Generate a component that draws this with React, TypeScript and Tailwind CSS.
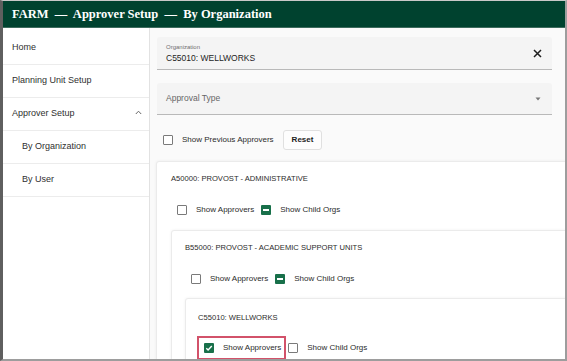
import React from "react";

const sans = { fontFamily: "'Liberation Sans', Arial, sans-serif" };

function Box({ state }: { state: "off" | "on" | "mixed" }) {
  if (state === "off") {
    return <span className="block w-[10px] h-[10px] shrink-0 rounded-[1px] border border-[#7a7a7a] bg-white" />;
  }
  return (
    <span className="flex w-[10px] h-[10px] shrink-0 items-center justify-center rounded-[1px] bg-[#18704a]">
      {state === "mixed" ? (
        <span className="block w-[6px] h-[2px] bg-white" />
      ) : (
        <svg width="8" height="8" viewBox="0 0 8 8">
          <path d="M1.3 4.2 L3.1 6 L6.8 2" fill="none" stroke="white" strokeWidth="1.4" />
        </svg>
      )}
    </span>
  );
}

function CheckRow({ approvers, child, mark }: { approvers: "off" | "on"; child: "off" | "mixed"; mark?: boolean }) {
  return (
    <div className="flex items-center h-[20px] pl-[6px] text-[8px] text-[#2b2b2b]">
      <div className="relative flex items-center gap-[9px]">
        {mark && <span className="absolute -left-[7px] -right-[5px] -top-[6px] -bottom-[6px] border-2 border-[#d2526a]" />}
        <Box state={approvers} />
        <span>Show Approvers</span>
      </div>
      <div className="flex items-center gap-[9px] ml-[7px]">
        <Box state={child} />
        <span>Show Child Orgs</span>
      </div>
    </div>
  );
}

const navItems: { label: string; sub?: boolean; open?: boolean }[] = [
  { label: "Home" },
  { label: "Planning Unit Setup" },
  { label: "Approver Setup", open: true },
  { label: "By Organization", sub: true },
  { label: "By User", sub: true },
];

export default function App() {
  return (
    <div
      className="w-[567px] h-[361px] flex flex-col overflow-hidden bg-white border-t border-t-[#c9c9c9] border-l-[3px] border-l-[#5f5f5f] border-r-2 border-r-[#9d9d9d] border-b-2 border-b-[#9d9d9d]"
      style={sans}
    >
      <header className="h-[27px] shrink-0 bg-[#00422f] flex items-center pl-[9px] border-b border-[#3d6b5d]">
        <h1 className="text-white font-bold text-[12.5px] leading-none" style={{ fontFamily: "'Liberation Serif', 'DejaVu Serif', serif" }}>
          FARM &nbsp;—&nbsp; Approver Setup &nbsp;—&nbsp; By Organization
        </h1>
      </header>

      <div className="flex flex-1 min-h-0">
        <nav className="w-[147px] shrink-0 bg-white border-r border-[#e2e2e2] pt-[4px]">
          {navItems.map((item) => (
            <div
              key={item.label}
              className={`h-[33px] flex items-center justify-between border-b border-[#ececec] text-[9px] text-[#2f2f2f] ${item.sub ? "pl-[19px]" : "pl-[9px]"} pr-[7px]`}
            >
              <span>{item.label}</span>
              {item.open && (
                <svg width="7" height="5" viewBox="0 0 7 5" className="-mt-[4px]">
                  <path d="M0.8 4 L3.5 1.2 L6.2 4" fill="none" stroke="#666" strokeWidth="1" />
                </svg>
              )}
            </div>
          ))}
        </nav>

        <main className="flex-1 min-w-0 overflow-hidden bg-[#fafafa] pt-[9px]">
          <div className="ml-[7px] w-[395px] h-[33px] bg-[#f4f4f4] border-b border-[#b9b9b9] rounded-t-[3px] flex items-center justify-between pl-[9px] pr-[10px]">
            <div className="flex flex-col">
              <span className="text-[6px] leading-[8px] text-[#6f6f6f]">Organization</span>
              <span className="text-[8.5px] leading-[12px] text-[#1e1e1e] mt-[1px]">C55010: WELLWORKS</span>
            </div>
            <svg width="9" height="9" viewBox="0 0 9 9">
              <path d="M1 1 L8 8 M8 1 L1 8" stroke="#1e1e1e" strokeWidth="1.5" />
            </svg>
          </div>

          <div className="ml-[7px] mt-[13px] w-[395px] h-[32px] bg-[#f4f4f4] border-b border-[#b9b9b9] rounded-t-[3px] flex items-center justify-between pl-[9px] pr-[11px]">
            <span className="text-[8.5px] text-[#666]">Approval Type</span>
            <svg width="6" height="4" viewBox="0 0 6 4">
              <path d="M0.5 0.5 L5.5 0.5 L3 3.5 Z" fill="#777" />
            </svg>
          </div>

          <div className="mt-[15px] ml-[13px] flex items-center h-[20px] text-[8px] text-[#2b2b2b]">
            <Box state="off" />
            <span className="ml-[9px]">Show Previous Approvers</span>
            <button className="ml-[9px] h-[20px] px-[8px] rounded-[3px] border border-[#e0e0e0] bg-[#fdfdfd] font-bold text-[8px] text-[#222]">
              Reset
            </button>
          </div>

          <div className="mt-[11px] ml-[6px] w-[440px] bg-white border border-[#ebebeb] rounded-[3px] shadow-[0_0_3px_rgba(0,0,0,0.06)] pl-[14px] pt-[12px]">
            <div className="text-[7.6px] leading-[10px] text-[#2b2b2b]">A50000: PROVOST - ADMINISTRATIVE</div>
            <div className="mt-[16px]">
              <CheckRow approvers="off" child="mixed" />
            </div>

            <div className="mt-[10px] bg-white border border-[#ebebeb] rounded-[3px] shadow-[0_0_3px_rgba(0,0,0,0.06)] pl-[13px] pt-[12px]">
              <div className="text-[7.6px] leading-[10px] text-[#2b2b2b]">B55000: PROVOST - ACADEMIC SUPPORT UNITS</div>
              <div className="mt-[16px]">
                <CheckRow approvers="off" child="mixed" />
              </div>

              <div className="mt-[9px] bg-white border border-[#ebebeb] rounded-[3px] shadow-[0_0_3px_rgba(0,0,0,0.06)] pl-[12px] pt-[14px] pb-[20px]">
                <div className="text-[7.6px] leading-[10px] text-[#2b2b2b]">C55010: WELLWORKS</div>
                <div className="mt-[15px]">
                  <CheckRow approvers="on" child="off" mark />
                </div>
              </div>
            </div>
          </div>
        </main>
      </div>
    </div>
  );
}
